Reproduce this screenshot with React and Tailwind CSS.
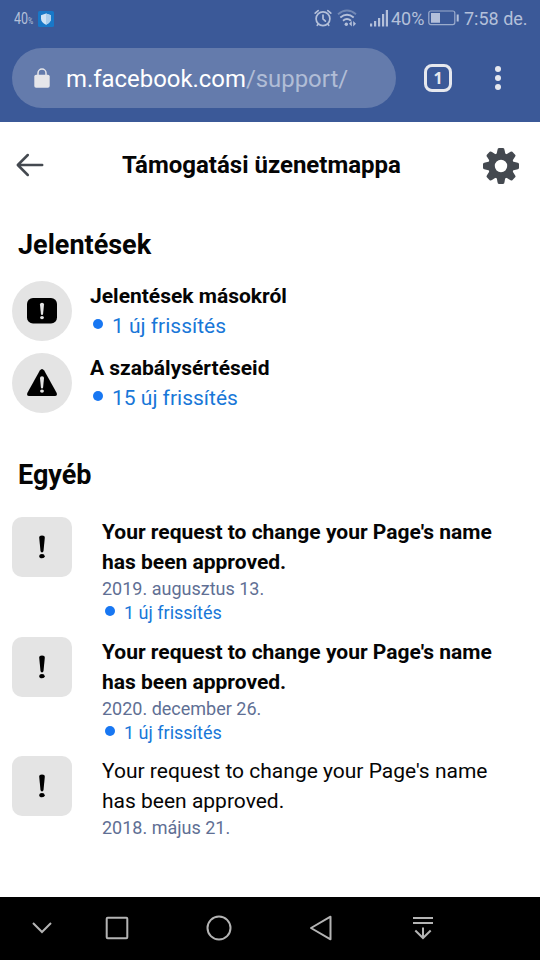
import React from "react";

const reports = [
  { title: "Jelentések másokról", updates: "1 új frissítés", icon: "report" },
  { title: "A szabálysértéseid", updates: "15 új frissítés", icon: "warning" },
];

const others = [
  { date: "2019. augusztus 13.", updates: "1 új frissítés", unread: true },
  { date: "2020. december 26.", updates: "1 új frissítés", unread: true },
  { date: "2018. május 21.", unread: false },
];

function Mark({ className }) {
  return (
    <g className={className}>
      <path d="M-2.8 -9.2Q-2.8 -11.6 0 -11.6T2.8 -9.2L1.5 4Q1.3 5.4 0 5.4T-1.5 4Z" />
      <ellipse cx="0" cy="9.2" rx="2.7" ry="2.1" />
    </g>
  );
}

function StatusBar() {
  return (
    <div className="flex h-9 items-center pl-[14px] pr-3 text-[#b4c0da]">
      <span className="inline-block w-[19px] origin-left scale-x-[0.78] whitespace-nowrap pt-0.5 text-[16px] leading-none">
        40<span className="text-[9px]">%</span>
      </span>
      <svg className="ml-[5px] mt-[2px] h-4 w-4" viewBox="0 0 16 16">
        <rect width="16" height="16" rx="1.5" fill="#1878c8" />
        <path d="M8 2.5 13 4.2V7.5Q13 11.5 8 13.8 3 11.5 3 7.5V4.2Z" fill="#cfe3f5" />
        <path d="M8 2.5 13 4.2V7.5Q13 11.5 8 13.8Z" fill="#aacdec" />
      </svg>
      <div className="ml-auto flex items-center">
        <svg className="h-[18px] w-[18px]" viewBox="0 0 18 18" fill="none" stroke="currentColor" strokeWidth="1.7" strokeLinecap="round">
          <circle cx="9" cy="9.7" r="6.9" />
          <path d="M9 6v4l2.4 2.2M1.2 4.2 4.2 1.6M16.8 4.2 13.8 1.6M4.3 15 3.3 16.3M13.7 15l1 1.3" />
        </svg>
        <svg className="ml-[5px] h-[18px] w-5" viewBox="0 0 20 18" fill="none" stroke="currentColor" strokeWidth="1.9">
          <path d="M1 5.3Q10 -2.2 19 5.3" opacity=".45" />
          <path d="M3.3 8.4Q10 3 16.7 8.4M6 11.7Q10 8.5 14 11.7" />
          <circle cx="9.3" cy="15.2" r="1.7" fill="currentColor" stroke="none" />
          <path d="M14.8 12 12 14.8l2.8 2.8zM16.2 12l2.8 2.8-2.8 2.8z" fill="currentColor" stroke="none" />
        </svg>
        <svg className="ml-[13px] h-[18px] w-[18px]" viewBox="0 0 18 18" fill="currentColor">
          <path d="M0 14.5h2.2v3H0zM4 12h2.2v5.5H4zM8 9h2.2v8.5H8zM12 5h2.2v12.5H12zM15.8 1H18v16.5h-2.2z" />
        </svg>
        <span className="ml-[3px] w-[33px] whitespace-nowrap pt-0.5 text-[18px] leading-none">40%</span>
        <svg className="ml-1 h-4 w-[31px]" viewBox="0 0 31 16">
          <rect x=".8" y="1" width="26" height="13.6" rx="2" fill="none" stroke="currentColor" strokeWidth="1.2" opacity=".8" />
          <path d="M3 3h9v9.7H3zM28.7 4.5h2v7h-2z" fill="currentColor" />
        </svg>
        <span className="ml-[5px] w-[64px] whitespace-nowrap pt-0.5 text-[18px] leading-none">7:58 de.</span>
      </div>
    </div>
  );
}

function AddressBar() {
  return (
    <div className="flex h-[85px] items-start px-3 pt-3">
      <div className="flex h-[60px] w-[384px] items-center rounded-full bg-[#647bac] pl-[22px]">
        <svg className="h-5 w-4" viewBox="0 0 16 20">
          <path d="M4 8V5a4 4 0 0 1 8 0v3" fill="none" stroke="#e6e6ea" strokeWidth="1.5" />
          <rect x=".3" y="6.8" width="15.4" height="13" rx="1.8" fill="#e6e6ea" />
        </svg>
        <span className="ml-4 whitespace-nowrap pt-1 text-[23.9px] leading-none text-white">
          m.facebook.com<span className="text-[#b1bdd6]">/support/</span>
        </span>
      </div>
      <div className="ml-7 mt-4 flex h-7 w-7 items-center justify-center rounded-[8px] border-3 border-[#e6e8ee] font-['Open_Sans',sans-serif] text-[16px] font-bold leading-none text-[#e6e8ee]">
        1
      </div>
      <div className="ml-[43px] mt-[18px] flex flex-col gap-[3px]">
        <i className="h-1.5 w-1.5 rounded-full bg-[#e6e8ee]" />
        <i className="h-1.5 w-1.5 rounded-full bg-[#e6e8ee]" />
        <i className="h-1.5 w-1.5 rounded-full bg-[#e6e8ee]" />
      </div>
    </div>
  );
}

function Gear() {
  return (
    <svg className="h-9 w-9" viewBox="-18 -18 36 36" fill="#444950">
      {[0, 45, 90, 135, 180, 225, 270, 315].map((angle) => (
        <path key={angle} transform={`rotate(${angle})`} d="M-5.6 -10.5Q-4 -12 -3.6 -15.8-3.4 -18 -2 -18H2Q3.4 -18 3.6 -15.8 4 -12 5.6 -10.5Z" />
      ))}
      <path fillRule="evenodd" d="M0 -12.6A12.6 12.6 0 1 1 0 12.6 12.6 12.6 0 1 1 0 -12.6ZM0 -6.2A6.2 6.2 0 1 0 0 6.2 6.2 6.2 0 1 0 0 -6.2Z" />
    </svg>
  );
}

function TitleRow() {
  return (
    <div className="flex h-[88px] items-center pl-4 pr-[21px]">
      <svg className="mb-0.5 h-6 w-7" viewBox="0 0 28 24" fill="none" stroke="#444950" strokeWidth="2.5" strokeLinecap="round" strokeLinejoin="round">
        <path d="M26.2 12H2M11.8 2 1.8 12l10 10" />
      </svg>
      <h1 className="ml-[78px] whitespace-nowrap pb-px text-[24px] font-bold leading-none">Támogatási üzenetmappa</h1>
      <div className="ml-auto">
        <Gear />
      </div>
    </div>
  );
}

function ReportIcon({ type }) {
  return (
    <div className="flex h-[60px] w-[60px] shrink-0 items-center justify-center rounded-full bg-[#e4e4e4]">
      <svg className="h-8 w-8" viewBox="0 0 32 32">
        {type === "report" ? (
          <rect x="1" y="3" width="30" height="25.6" rx="6" />
        ) : (
          <path d="M13.8 3.4Q16 .4 18.2 3.4L30.7 26Q31.6 29 29 29H3Q.4 29 1.3 26Z" />
        )}
        <g transform={type === "report" ? "translate(16 16) scale(.72)" : "translate(16 17.5) scale(.72)"}>
          <Mark className="fill-[#e4e4e4]" />
        </g>
      </svg>
    </div>
  );
}

function Updates({ children, small }) {
  return (
    <p className={small ? "flex h-6 items-center text-[18px] text-[#1877d8]" : "flex h-[30px] items-center text-[21px] text-[#1877d8]"}>
      <i className={small ? "mb-1 ml-[3px] mr-[9px] h-2.5 w-2.5 rounded-full bg-[#1877f2]" : "mb-[3px] ml-[3px] mr-[9px] h-2.5 w-2.5 rounded-full bg-[#1877f2]"} />
      <span className={small ? "pb-px" : "pt-0.5"}>{children}</span>
    </p>
  );
}

export default function App() {
  return (
    <div className="flex h-[960px] w-[540px] flex-col overflow-hidden bg-white font-[Roboto,sans-serif] text-[#050505]">
      <header className="h-[121.5px] shrink-0 bg-[#3b5998]">
        <StatusBar />
        <AddressBar />
      </header>

      <main className="flex-1">
        <TitleRow />

        <h2 className="mt-[17px] pl-[18px] text-[27px] font-bold leading-9">Jelentések</h2>
        <div className="mt-[18px] flex flex-col gap-3 pl-3">
          {reports.map((r) => (
            <div key={r.title} className="flex">
              <ReportIcon type={r.icon} />
              <div className="ml-[18px] whitespace-nowrap">
                <h3 className="text-[21px] font-bold leading-[30px]">{r.title}</h3>
                <Updates>{r.updates}</Updates>
              </div>
            </div>
          ))}
        </div>

        <h2 className="mt-[44.8px] pl-[18px] text-[27px] font-bold leading-9">Egyéb</h2>
        <div className="mt-6 flex flex-col gap-[11.3px] pl-3">
          {others.map((o) => (
            <div key={o.date} className="flex">
              <div className="flex h-[60px] w-[60px] shrink-0 items-center justify-center rounded-[10px] bg-[#e4e4e4]">
                <svg className="h-6 w-6" viewBox="-12 -12 24 24">
                  <Mark />
                </svg>
              </div>
              <div className="ml-[30px] whitespace-nowrap">
                <h3 className={o.unread ? "text-[21px] font-bold leading-[30px]" : "text-[21px] leading-[30px]"}>
                  Your request to change your Page's name
                  <br />
                  has been approved.
                </h3>
                <p className="text-[18px] leading-6 text-[#606f94]">{o.date}</p>
                {o.updates && <Updates small>{o.updates}</Updates>}
              </div>
            </div>
          ))}
        </div>
      </main>

      <nav className="flex h-[63px] shrink-0 items-center bg-black pb-px pl-8 text-[#b4b4b4]">
        <svg className="h-7 w-5" viewBox="0 0 20 28" fill="none" stroke="currentColor" strokeWidth="2">
          <path d="M1 9l9 9 9-9" />
        </svg>
        <svg className="ml-[52px] h-[26px] w-[26px]" viewBox="0 0 26 26" fill="none" stroke="currentColor" strokeWidth="2">
          <rect x="2.7" y="2.7" width="20.6" height="20.6" rx="1" />
        </svg>
        <svg className="ml-[76px] h-[26px] w-[26px]" viewBox="0 0 26 26" fill="none" stroke="currentColor" strokeWidth="2">
          <circle cx="13" cy="13" r="11.5" />
        </svg>
        <svg className="ml-[76px] h-[26px] w-[26px]" viewBox="0 0 26 26" fill="none" stroke="currentColor" strokeWidth="2" strokeLinejoin="round">
          <path d="M22.5 1.7v22.6L3 13z" />
        </svg>
        <svg className="ml-[76px] h-[26px] w-[26px]" viewBox="0 0 26 26" fill="none" stroke="currentColor" strokeWidth="2">
          <path d="M3 3h20M3 8h20M13 12.5V23M5.3 15.5 13 23l7.7-7.5" />
        </svg>
      </nav>
    </div>
  );
}
